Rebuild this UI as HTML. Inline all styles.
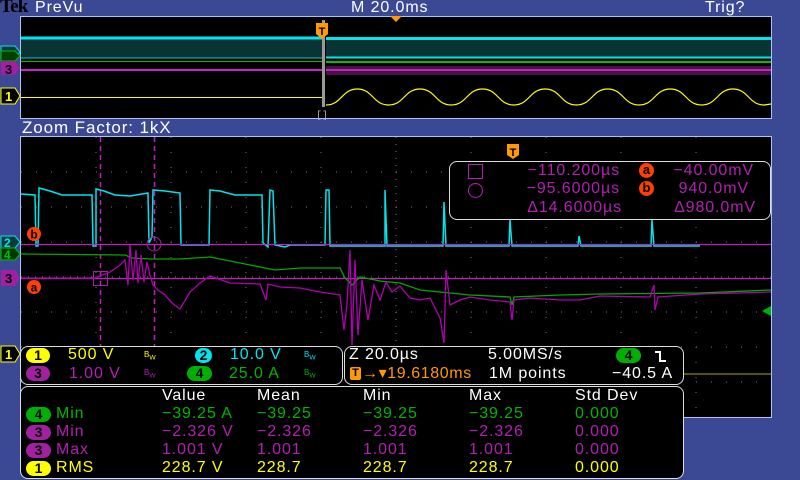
<!DOCTYPE html>
<html><head><meta charset="utf-8"><style>
body{margin:0;width:800px;height:480px;background:#3b4894;overflow:hidden;position:relative;font-family:"Liberation Sans",sans-serif;}
.t{position:absolute;white-space:pre;font-size:16px;line-height:16px;letter-spacing:0.9px}
.w{color:#fff}.y{color:#ffff00}.c{color:#00e4f0}.g{color:#00b400}.m{color:#b41eb4}.o{color:#ff9a00}
.b{position:absolute;height:15px;border-radius:8px;text-align:center;font-size:14px;line-height:15px;color:#000;font-weight:bold}
.panel{position:absolute;border:1.5px solid #ddd;border-radius:8px;background:#000;box-sizing:border-box}
.bw{position:absolute;font-size:8px;line-height:8px}
</style></head><body>
<div class="t" style="left:0;top:-1px;color:#000;font-family:'Liberation Serif',serif;font-weight:bold;font-size:19px;letter-spacing:-0.8px">Tek</div>
<div class="t w" style="left:35px;top:0;font-size:16px">PreVu</div>
<div class="t w" style="left:351px;top:0">M 20.0ms</div>
<div class="t w" style="left:705px;top:0">Trig?</div>
<div class="t w" style="left:22px;top:120px;font-size:17px">Zoom Factor: 1kX</div>

<svg width="800" height="480" style="position:absolute;left:0;top:0">
<rect x="20.5" y="16.5" width="751" height="102" fill="#000" stroke="#a8c4f0"/>
<rect x="21" y="38" width="302" height="20" fill="#0a3434"/>
<line x1="21" y1="38" x2="323" y2="38" stroke="#00e4f0" stroke-width="3"/>
<line x1="21" y1="58" x2="323" y2="58" stroke="#00c8d8" stroke-width="1"/>
<line x1="21" y1="61.5" x2="323" y2="61.5" stroke="#00c000"/>
<line x1="21" y1="70" x2="323" y2="70" stroke="#d020d0" stroke-width="2"/>
<line x1="21" y1="97.5" x2="323" y2="97.5" stroke="#ffff00"/>
<rect x="326" y="39" width="445" height="18" fill="#0a3434"/>
<line x1="326" y1="38.5" x2="771" y2="38.5" stroke="#00e4f0" stroke-width="3"/>
<line x1="326" y1="57.5" x2="771" y2="57.5" stroke="#00e4f0" stroke-width="2"/>
<line x1="326" y1="62" x2="771" y2="62" stroke="#00c000" stroke-width="2"/>
<rect x="326" y="66" width="445" height="9" fill="#4a104a"/>
<line x1="326" y1="70" x2="771" y2="70" stroke="#e030e0" stroke-width="1.5"/>
<path d="M326,105 C341.7,105 341.7,89 357.3,89 S373,105 388.6,105 S404.3,89 419.9,89 S435.6,105 451.2,105 S466.9,89 482.5,89 S498.2,105 513.8,105 S529.5,89 545.1,89 S560.8,105 576.4,105 S592.1,89 607.7,89 S623.4,105 639,105 S654.7,89 670.3,89 S686,105 701.6,105 S717.3,89 732.9,89 S748.6,105 764.2,105 L771,104" fill="none" stroke="#ffff00" stroke-width="1.2"/>
<rect x="322" y="20" width="3" height="87" fill="#999"/>
<path d="M316,23 h12 v11 l-6,5 l-6,-5z" fill="#ff9a00"/>
<text x="322" y="35" font-size="11" font-weight="bold" text-anchor="middle" font-family="Liberation Sans">T</text>
<text x="322" y="118" font-size="10" fill="#aaa" text-anchor="middle" font-family="Liberation Mono">[]</text>
<path d="M390,16 h12 l-6,6z" fill="#ff9a00"/>
<path d="M1,46 h14 l5,6 l-5,6 h-14z" fill="#0a3a3a" stroke="#00e4f0"/>
<path d="M1,51 h14 l5,5 l-5,5 h-14z" fill="#004000" stroke="#00c000"/>
<path d="M1,61 h14 l5,7 l-5,7 h-14z" fill="#a020a0"/>
<text x="5" y="74" font-size="13" fill="#000" font-weight="bold" font-family="Liberation Sans">3</text>
<path d="M1,88 h14 l5,8 l-5,8 h-14z" fill="#000" stroke="#ffff00"/>
<text x="5" y="101" font-size="13" fill="#ffff00" font-weight="bold" font-family="Liberation Sans">1</text>

<rect x="20.5" y="136.5" width="751" height="281" fill="#000" stroke="#a8c4f0"/>
<g stroke="#777" stroke-width="1" stroke-dasharray="1,14">
<line x1="96" y1="137" x2="96" y2="417"/><line x1="171" y1="137" x2="171" y2="417"/><line x1="246" y1="137" x2="246" y2="417"/><line x1="321" y1="137" x2="321" y2="417"/><line x1="396" y1="137" x2="396" y2="417" stroke-dasharray="1,6"/><line x1="471" y1="137" x2="471" y2="417"/><line x1="546" y1="137" x2="546" y2="417"/><line x1="621" y1="137" x2="621" y2="417"/><line x1="696" y1="137" x2="696" y2="417"/>
<line x1="21" y1="172" x2="771" y2="172"/><line x1="21" y1="207" x2="771" y2="207"/><line x1="21" y1="242" x2="771" y2="242"/><line x1="21" y1="277" x2="771" y2="277" stroke-dasharray="1,6"/><line x1="21" y1="312" x2="771" y2="312"/><line x1="21" y1="347" x2="771" y2="347"/><line x1="21" y1="382" x2="771" y2="382"/>
</g>
<polyline fill="none" stroke="#00e4f0" stroke-width="1.5" points="21,194 35,195 36,246 38,246 39,188 50,191 62,195 92,195 93,246 96,246 96,189 104,191 115,195 130,196 142,194 148,193 149,243 152,237 153,190 165,191 180,193 181,245 209,245 210,190 220,191 235,195 262,195 263,243 268,247 270,190 273,191 275,245 285,247 290,245 325,245 326,190 329,190 330,246 385,246 385,190 387,246 443,246 444,202 446,246 509,246 510,220 512,246 578,246 579,236 581,246 651,246 652,220 654,246 700,246"/>
<line x1="21" y1="244.5" x2="771" y2="244.5" stroke="#c020c0" stroke-width="1.2"/>
<line x1="21" y1="278.5" x2="771" y2="278.5" stroke="#c020c0" stroke-width="1.2"/>
<line x1="100.5" y1="137" x2="100.5" y2="346" stroke="#c020c0" stroke-width="1.5" stroke-dasharray="5,4"/>
<line x1="154.5" y1="137" x2="154.5" y2="346" stroke="#c020c0" stroke-width="1.5" stroke-dasharray="5,4"/>
<rect x="93.5" y="271.5" width="14" height="14" fill="none" stroke="#a020a0"/>
<circle cx="154" cy="244" r="7" fill="none" stroke="#a020a0"/>
<polyline fill="none" stroke="#00a800" stroke-width="1.3" points="21,254 125,255 132,258 150,259 180,259 210,257 250,265 275,270 300,268 340,268 345,278 352,285 360,277 380,281 400,283 420,290 470,295 510,297 512,305 514,297 560,295 600,294 700,293 771,290"/>
<polyline fill="none" stroke="#b000b0" stroke-width="1.3" points="21,278 95,278 110,272 120,265 125,260 128,285 130,245 133,280 136,250 138,283 141,255 144,282 147,262 150,275 153,285 158,290 165,295 172,303 180,309 190,292 200,283 210,276 230,283 260,284 266,300 268,284 280,287 300,288 320,292 340,295 344,330 347,305 350,250 352,345 355,260 358,335 362,280 368,320 374,285 380,300 386,282 392,292 400,286 410,298 420,300 430,298 440,318 444,343 446,270 450,305 460,300 470,297 490,300 510,302 512,320 514,300 530,298 560,300 580,300 600,296 650,297 654,285 655,310 658,297 700,294 771,292"/>
<line x1="684" y1="374" x2="771" y2="374" stroke="#8a8a00" stroke-width="1.3"/>
<path d="M771,306 l-9,5 l9,5z" fill="#00b000"/>
<path d="M507,144 h12 v11 l-6,4 l-6,-4z" fill="#ff9a00"/>
<text x="513" y="156" font-size="11" font-weight="bold" text-anchor="middle" font-family="Liberation Sans">T</text>
<path d="M1,236 h14 l5,6 l-5,6 h-14z" fill="#0a3a3a" stroke="#00e4f0"/>
<text x="4" y="247" font-size="12" fill="#00e4f0" font-weight="bold" font-family="Liberation Sans">2</text>
<path d="M1,248 h14 l5,6 l-5,6 h-14z" fill="#003800" stroke="#00c000"/>
<text x="4" y="259" font-size="12" fill="#00c000" font-weight="bold" font-family="Liberation Sans">4</text>
<path d="M1,270 h14 l5,8 l-5,8 h-14z" fill="#a020a0"/>
<text x="5" y="283" font-size="13" fill="#000" font-weight="bold" font-family="Liberation Sans">3</text>
<circle cx="34" cy="234" r="7" fill="#ff4000"/><text x="34" y="238.5" font-size="12" font-weight="bold" text-anchor="middle" font-family="Liberation Sans">b</text>
<circle cx="34" cy="287" r="7" fill="#ff4000"/><text x="34" y="291.5" font-size="12" font-weight="bold" text-anchor="middle" font-family="Liberation Sans">a</text>
<path d="M1,346 h14 l5,8 l-5,8 h-14z" fill="#000" stroke="#ffff00"/>
<text x="5" y="359" font-size="13" fill="#ffff00" font-weight="bold" font-family="Liberation Sans">1</text>
</svg>

<div class="panel" style="left:449px;top:161px;width:322px;height:59px"></div>
<div style="position:absolute;left:468px;top:164px;width:13px;height:13px;border:1.5px solid #b41eb4"></div>
<div style="position:absolute;left:468px;top:183px;width:13px;height:13px;border:1.5px solid #b41eb4;border-radius:50%"></div>
<div class="t m" style="left:510px;top:163px;width:110px;text-align:right">−110.200µs</div>
<div class="t m" style="left:510px;top:181px;width:110px;text-align:right">−95.6000µs</div>
<div class="t m" style="left:510px;top:200px;width:112px;text-align:right">Δ14.6000µs</div>
<div style="position:absolute;left:639px;top:163px;width:15px;height:15px;border-radius:50%;background:#ff4000;text-align:center;font:bold 13px/14px 'Liberation Sans'">a</div>
<div style="position:absolute;left:639px;top:181px;width:15px;height:15px;border-radius:50%;background:#ff4000;text-align:center;font:bold 13px/14px 'Liberation Sans'">b</div>
<div class="t m" style="left:650px;top:163px;width:104px;text-align:right">−40.00mV</div>
<div class="t m" style="left:650px;top:181px;width:99px;text-align:right">940.0mV</div>
<div class="t m" style="left:650px;top:200px;width:106px;text-align:right">Δ980.0mV</div>

<div class="panel" style="left:20px;top:346px;width:323px;height:39px"></div>
<div class="b" style="left:26px;top:348px;width:24px;background:#ffff00">1</div>
<div class="t y" style="left:68px;top:347px">500 V</div>
<div class="bw y" style="left:144px;top:351px">B<sub>W</sub></div>
<div class="b" style="left:195px;top:348px;width:17px;background:#00e4f0">2</div>
<div class="t c" style="left:230px;top:347px">10.0 V</div>
<div class="bw c" style="left:304px;top:351px">B<sub>W</sub></div>
<div class="b" style="left:26px;top:366px;width:24px;background:#a020a0">3</div>
<div class="t m" style="left:69px;top:366px">1.00 V</div>
<div class="bw m" style="left:144px;top:369px">B<sub>W</sub></div>
<div class="b" style="left:187px;top:366px;width:25px;background:#00b000">4</div>
<div class="t g" style="left:229px;top:366px">25.0 A</div>
<div class="bw g" style="left:304px;top:369px">B<sub>W</sub></div>

<div class="panel" style="left:344px;top:346px;width:340px;height:39px"></div>
<div class="t w" style="left:349px;top:347px">Z 20.0µs</div>
<div class="t w" style="left:488px;top:347px">5.00MS/s</div>
<div class="b" style="left:616px;top:348px;width:25px;background:#00b000">4</div>
<svg width="14" height="14" style="position:absolute;left:654px;top:350px"><path d="M1,2 H6 V11 H12" fill="none" stroke="#fff" stroke-width="2"/></svg>
<div style="position:absolute;left:350px;top:367px;width:11px;height:13px;background:#ff9a00;border-radius:2px;font:bold 11px/13px 'Liberation Sans';text-align:center">T</div>
<div class="t o" style="left:362px;top:366px;letter-spacing:0.6px">→▾19.6180ms</div>
<div class="t w" style="left:489px;top:366px">1M points</div>
<div class="t w" style="left:612px;top:366px">−40.5 A</div>

<div class="panel" style="left:20px;top:386px;width:664px;height:93px"></div>
<div class="t w" style="left:162px;top:388px">Value</div>
<div class="t w" style="left:257px;top:388px">Mean</div>
<div class="t w" style="left:363px;top:388px">Min</div>
<div class="t w" style="left:469px;top:388px">Max</div>
<div class="t w" style="left:575px;top:388px">Std Dev</div>

<div class="b" style="left:26px;top:407px;width:25px;background:#00b000">4</div>
<div class="t g" style="left:56px;top:406px">Min</div>
<div class="t g" style="left:162px;top:406px">−39.25 A</div>
<div class="t g" style="left:257px;top:406px">−39.25</div>
<div class="t g" style="left:363px;top:406px">−39.25</div>
<div class="t g" style="left:469px;top:406px">−39.25</div>
<div class="t g" style="left:575px;top:406px">0.000</div>

<div class="b" style="left:26px;top:425px;width:25px;background:#a020a0">3</div>
<div class="t m" style="left:56px;top:424px">Min</div>
<div class="t m" style="left:162px;top:424px">−2.326 V</div>
<div class="t m" style="left:257px;top:424px">−2.326</div>
<div class="t m" style="left:363px;top:424px">−2.326</div>
<div class="t m" style="left:469px;top:424px">−2.326</div>
<div class="t m" style="left:575px;top:424px">0.000</div>

<div class="b" style="left:26px;top:443px;width:25px;background:#a020a0">3</div>
<div class="t m" style="left:56px;top:442px">Max</div>
<div class="t m" style="left:162px;top:442px">1.001 V</div>
<div class="t m" style="left:257px;top:442px">1.001</div>
<div class="t m" style="left:363px;top:442px">1.001</div>
<div class="t m" style="left:469px;top:442px">1.001</div>
<div class="t m" style="left:575px;top:442px">0.000</div>

<div class="b" style="left:26px;top:461px;width:25px;background:#ffff00">1</div>
<div class="t y" style="left:56px;top:460px">RMS</div>
<div class="t y" style="left:162px;top:460px">228.7 V</div>
<div class="t y" style="left:257px;top:460px">228.7</div>
<div class="t y" style="left:363px;top:460px">228.7</div>
<div class="t y" style="left:469px;top:460px">228.7</div>
<div class="t y" style="left:575px;top:460px">0.000</div>
</body></html>
